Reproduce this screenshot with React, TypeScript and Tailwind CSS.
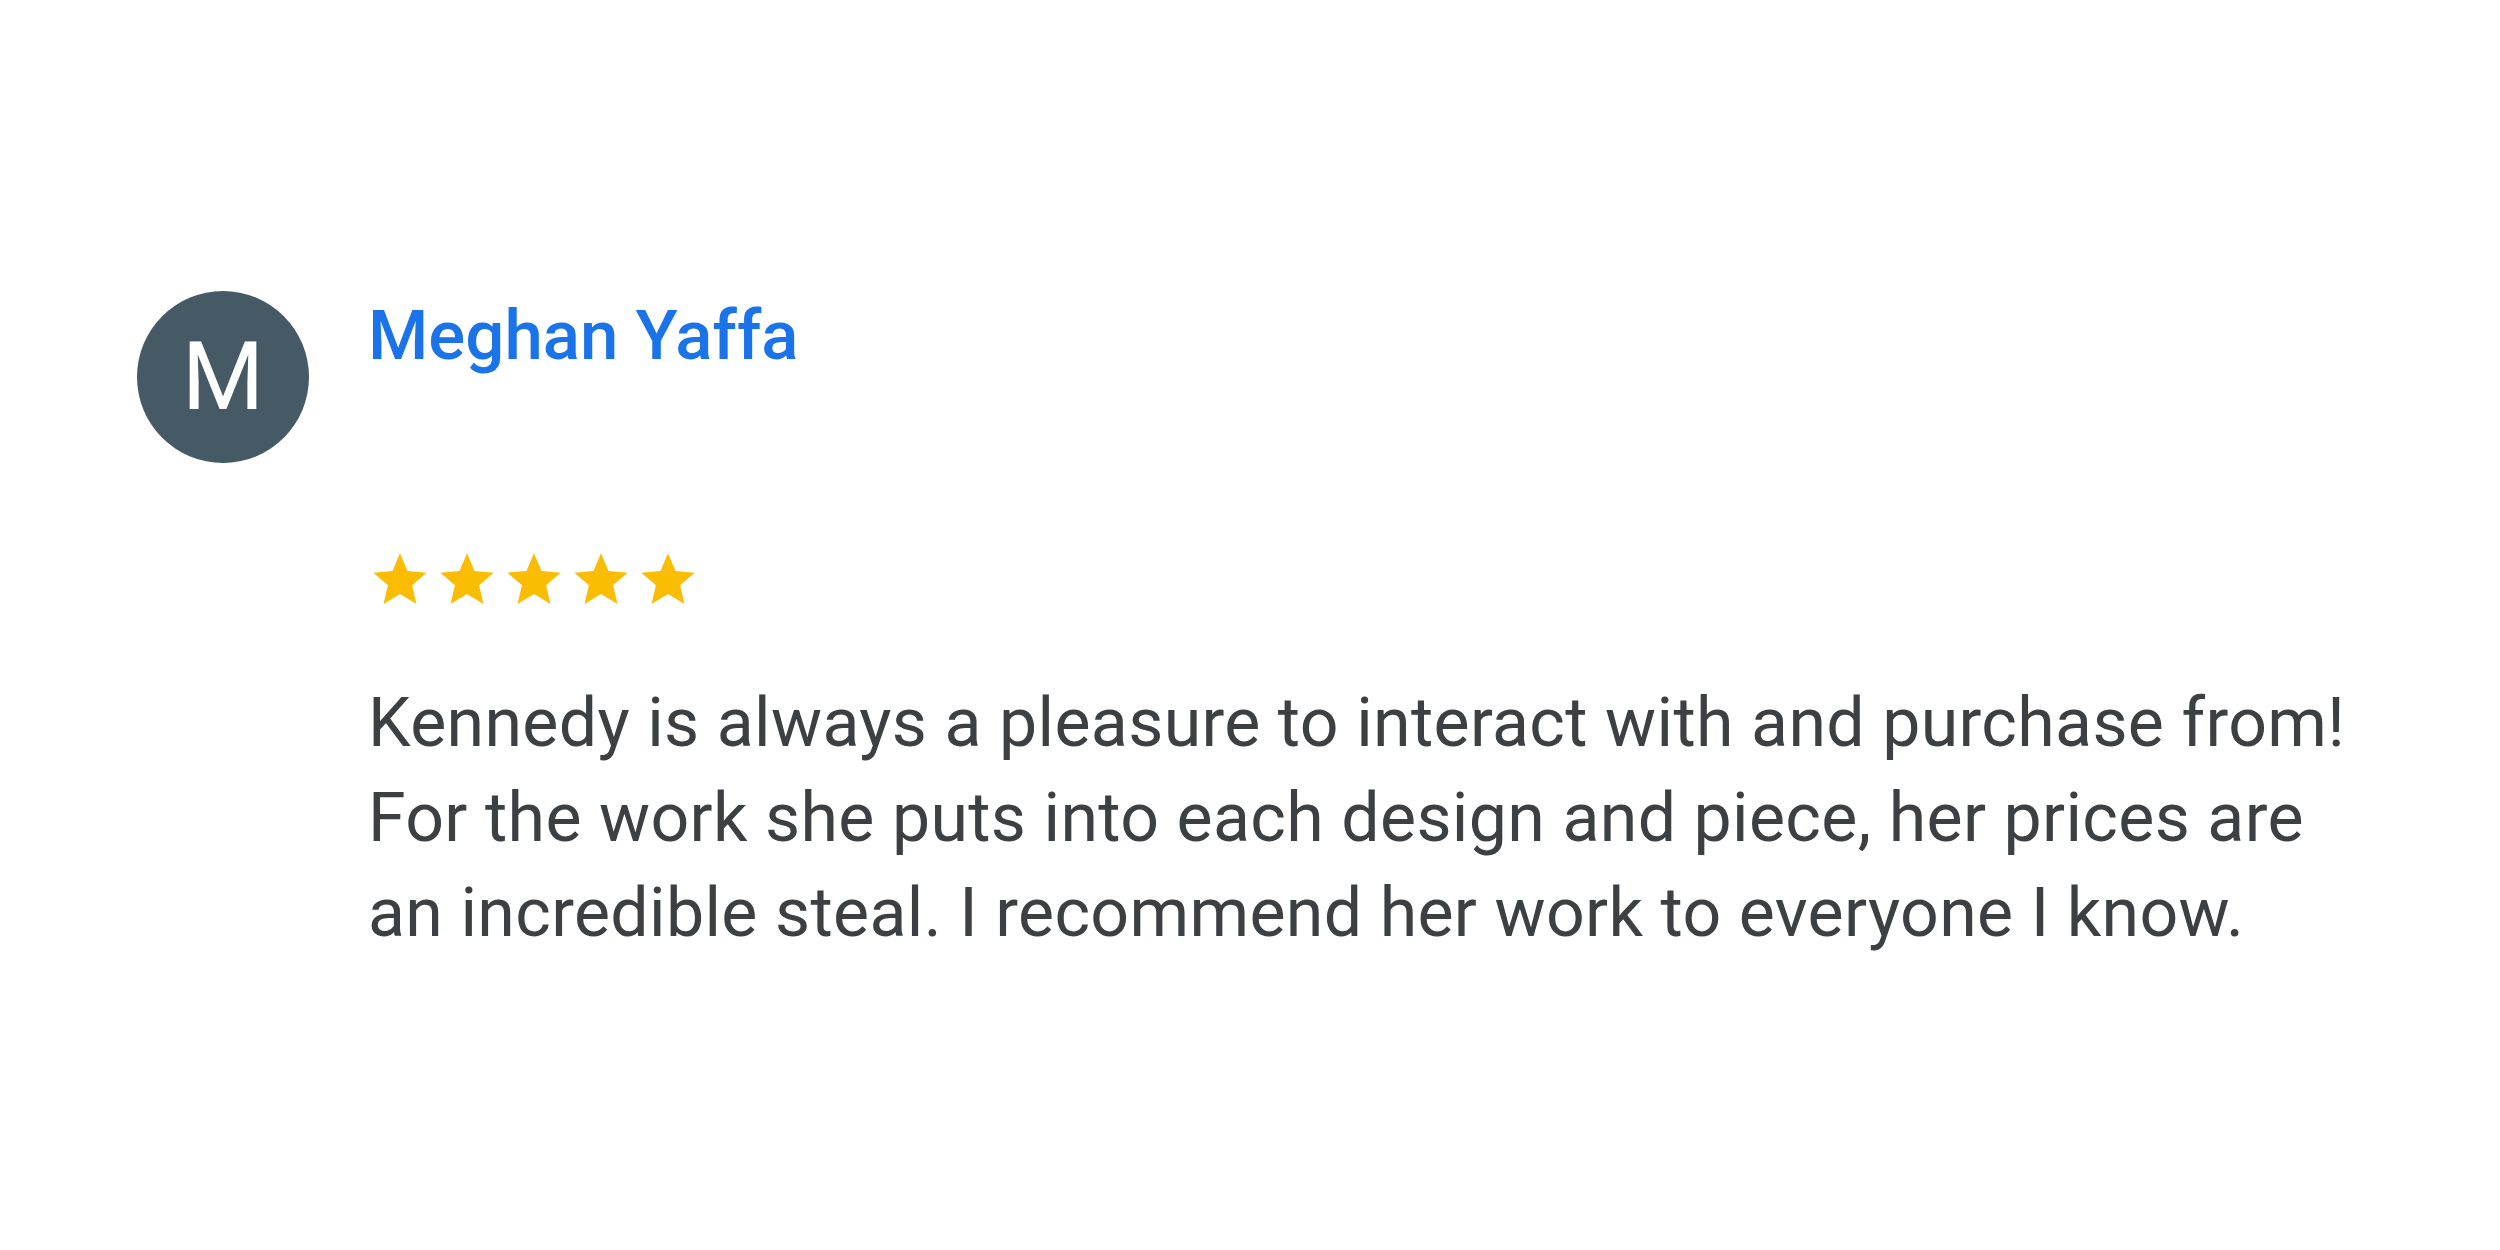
const reviewText =
  'Kennedy is always a pleasure to interact with and purchase from! For the work she puts into each design and piece, her prices are an incredible steal. I recommend her work to everyone I know.';

function Star() {
  return (
    <svg viewBox="0 0 24 24" className="w-16 h-16 fill-[#fbbc04]">
      <path d="M12 17.27 18.18 21l-1.64-7.03L22 9.24l-7.19-.61L12 2 9.19 8.63 2 9.24l5.46 4.73L5.82 21z" />
    </svg>
  );
}

export default function App() {
  return (
    <div className="w-[2500px] h-[1250px] bg-white font-['Roboto',sans-serif]">
      <div className="flex items-start gap-[59px] pl-[137px] pt-[291px]">
        <div className="w-[172px] h-[172px] shrink-0 rounded-full bg-[#455a64] text-white flex items-center justify-center text-[94px] leading-none">
          M
        </div>

        <div className="flex flex-col">
          <div className="mt-[5px] text-[69px] leading-[80px] font-medium text-[#1a73e8]">
            Meghan Yaffa
          </div>

          <div className="mt-[172px] flex gap-[3px]">
            {[0, 1, 2, 3, 4].map((i) => (
              <Star key={i} />
            ))}
          </div>

          <p className="mt-[64px] w-[2000px] text-[68px] leading-[95px] tracking-[0.35px] text-[#3c4043]">
            {reviewText}
          </p>
        </div>
      </div>
    </div>
  );
}
